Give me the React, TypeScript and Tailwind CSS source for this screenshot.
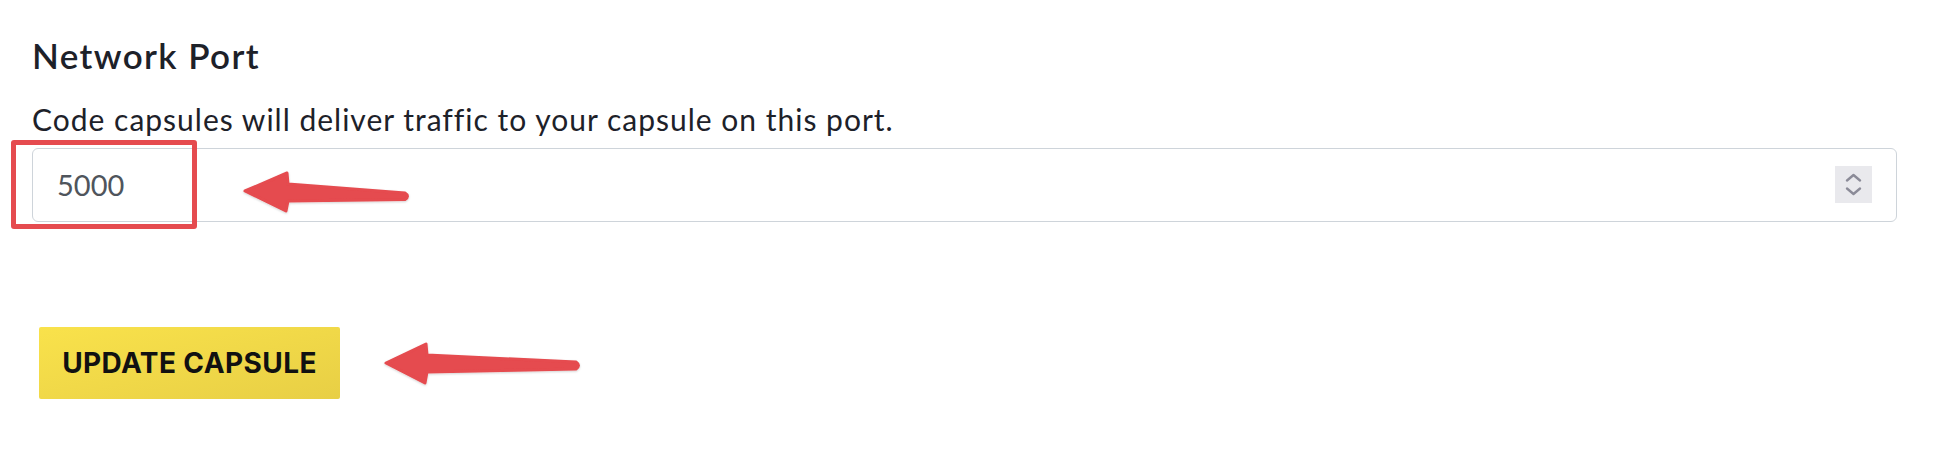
import React from "react";

function ArrowsOverlay() {
  return (
    <svg
      className="pointer-events-none absolute left-0 top-0"
      width={1944}
      height={462}
      viewBox="0 0 1944 462"
    >
      <defs>
        <filter id="sh" x="-10%" y="-30%" width="120%" height="160%">
          <feDropShadow dx="0" dy="1" stdDeviation="1.2" floodColor="#000" floodOpacity="0.18" />
        </filter>
      </defs>
      <path
        d="M245 191 L287 173 L288 184 L405 193 Q410 196 405 199.5 L288 201 L286 211 Z"
        fill="#e54b4f"
        stroke="#e54b4f"
        strokeWidth={3}
        strokeLinejoin="round"
        filter="url(#sh)"
      />
      <path
        d="M386 363 L426 344 L427 355 L576 362 Q581 365.5 576 369 L427 372 L425 383 Z"
        fill="#e54b4f"
        stroke="#e54b4f"
        strokeWidth={3}
        strokeLinejoin="round"
        filter="url(#sh)"
      />
    </svg>
  );
}

export default function App() {
  return (
    <div className="relative h-[462px] w-[1944px] overflow-hidden bg-white">
      <div className="flex flex-col pl-[32px] pr-[47px] pt-[34px]">
        <h2
          className="text-[35px] leading-[42px] font-semibold text-[#1d2129] tracking-[1.4px]"
          style={{ fontFamily: "Lato, 'Noto Sans', sans-serif" }}
        >
          Network Port
        </h2>
        <p
          className="mt-[25px] text-[30px] leading-[36px] text-[#1d2129] tracking-[1px]"
          style={{ fontFamily: "Lato, 'Noto Sans', sans-serif" }}
        >
          Code capsules will deliver traffic to your capsule on this port.
        </p>
        <div className="relative mt-[11px] h-[74px] w-full rounded-[6px] border-[1.5px] border-[#ced4da] bg-white">
          <div
            className="flex h-full items-center pl-[24px] text-[29px] text-[#4f555c]"
            style={{ fontFamily: "Lato, 'Noto Sans', sans-serif" }}
          >
            5000
          </div>
          <div className="absolute right-[24px] top-[17px] flex h-[37px] w-[37px] flex-col items-center justify-center gap-[5px] bg-[#e9e9ed]">
            <svg width="17" height="9" viewBox="0 0 17 9">
              <path d="M2 7.5 L8.5 2 L15 7.5" fill="none" stroke="#8b8b98" strokeWidth="2.3" strokeLinecap="round" strokeLinejoin="round" />
            </svg>
            <svg width="17" height="9" viewBox="0 0 17 9">
              <path d="M2 1.5 L8.5 7 L15 1.5" fill="none" stroke="#8b8b98" strokeWidth="2.3" strokeLinecap="round" strokeLinejoin="round" />
            </svg>
          </div>
          <div className="absolute left-[-22px] top-[-9px] h-[89px] w-[186px] rounded-[3px] border-[5px] border-[#e54b4f]" />
        </div>
        <div className="mt-[105px] pl-[7px]">
          <button
            className="flex h-[72px] w-[301px] items-center justify-center whitespace-nowrap rounded-[2px] bg-gradient-to-br from-[#f9e24b] to-[#e8cf45] text-[28px] font-bold text-[#111111]"
            style={{ fontFamily: "Inter, 'Noto Sans', sans-serif" }}
          >
            <span className="inline-block whitespace-nowrap tracking-[0.4px]">UPDATE CAPSULE</span>
          </button>
        </div>
      </div>
      <ArrowsOverlay />
    </div>
  );
}
